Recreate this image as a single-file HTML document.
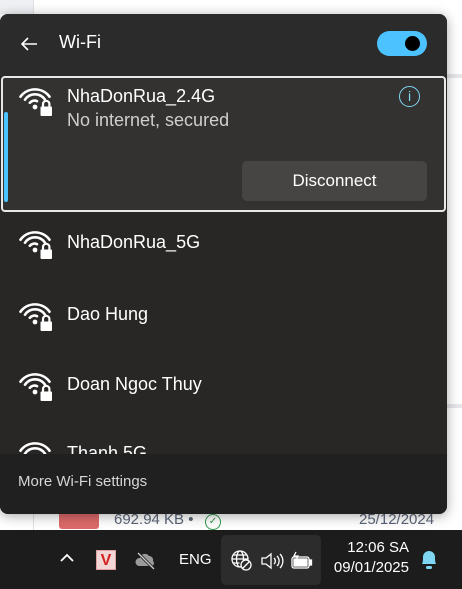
<!DOCTYPE html>
<html><head><meta charset="utf-8"><style>
*{margin:0;padding:0;box-sizing:border-box}
body{width:462px;height:589px;overflow:hidden;background:#fff;font-family:"Segoe UI","Liberation Sans",sans-serif;position:relative}
.abs{position:absolute}
.panel{left:0;top:14px;width:447px;height:500px;border-radius:8px;background:#282726;overflow:hidden;box-shadow:0 2px 12px rgba(0,0,0,.35)}
.t{color:#fff;font-size:18px;white-space:nowrap}
</style></head><body>
<div class="abs" style="left:0;top:0;width:33px;height:14px;background:#eef0f3"></div>
<div class="abs" style="left:33px;top:0;width:1px;height:14px;background:#dfe1e5"></div>
<div class="abs" style="left:447px;top:74px;width:15px;height:4px;background:#e6e7ea"></div>
<div class="abs" style="left:447px;top:404px;width:15px;height:4px;background:#e6e7ea"></div>
<div class="abs" style="left:33px;top:514px;width:1px;height:16px;background:#dfe1e5"></div>
<div class="abs" style="left:59px;top:511px;width:40px;height:18px;border-radius:3px;background:#dd6a6a"></div>
<div class="abs" style="left:114px;top:511px;font-size:15px;color:#5a6478">692.94 KB •</div>
<div class="abs" style="left:205px;top:514px;width:16px;height:16px;border:1.5px solid #2a9a4a;border-radius:50%;color:#2a9a4a;font-size:10px;text-align:center;line-height:13px">✓</div>
<div class="abs" style="left:359px;top:511px;font-size:15px;color:#5a6478">25/12/2024</div>

<div class="abs panel">
  <div class="abs" style="left:0;top:0;width:447px;height:62px;background:#2b2b2b"></div>
  <svg class="abs" style="left:20px;top:22px" width="18" height="16"><path d="M17 8H2M8 2L2 8l6 6" stroke="#fff" stroke-width="1.6" fill="none"/></svg>
  <div class="abs t" style="left:59px;top:18px">Wi-Fi</div>
  <div class="abs" style="left:377px;top:17px;width:50px;height:25px;border-radius:13px;background:#4cc2ff"></div>
  <div class="abs" style="left:405px;top:22px;width:15px;height:15px;border-radius:50%;background:#000"></div>

  <div class="abs" style="left:1px;top:62px;width:445px;height:136px;border:2px solid #e8e8e8;border-radius:4px;background:#333231"></div>
  <div class="abs" style="left:4px;top:98px;width:4px;height:90px;border-radius:2px;background:#4cc2ff"></div>
  <svg class="abs" style="left:18px;top:72px" width="36" height="32"><g stroke="#fff" stroke-width="2.6" fill="none" stroke-linecap="round"><path d="M2.5 10.7A18 18 0 0 1 31.5 10.7"/><path d="M7 13.7A12 12 0 0 1 27 13.7"/><path d="M11.8 16.8A6 6 0 0 1 19 15.2"/></g><circle cx="17" cy="21" r="2.4" fill="#fff"/><path d="M25 21v-3a3.2 3.2 0 0 1 6.4 0v3" stroke="#fff" stroke-width="2.2" fill="none"/><rect x="22.5" y="20.5" width="11.5" height="9.5" rx="1" fill="#fff"/></svg>
  <div class="abs t" style="left:67px;top:72px">NhaDonRua_2.4G</div>
  <div class="abs t" style="left:67px;top:96px;color:#cfcfcf">No internet, secured</div>
  <div class="abs" style="left:399px;top:72px;width:21px;height:21px;border:1.6px solid #7fd6f3;border-radius:50%;color:#7fd6f3;font-size:14px;text-align:center;line-height:18px">i</div>
  <div class="abs" style="left:242px;top:147px;width:185px;height:40px;border-radius:5px;background:#464543;color:#fff;font-size:17px;text-align:center;line-height:40px">Disconnect</div>

  <svg class="abs" style="left:18px;top:215px" width="36" height="32"><g stroke="#fff" stroke-width="2.6" fill="none" stroke-linecap="round"><path d="M2.5 10.7A18 18 0 0 1 31.5 10.7"/><path d="M7 13.7A12 12 0 0 1 27 13.7"/><path d="M11.8 16.8A6 6 0 0 1 19 15.2"/></g><circle cx="17" cy="21" r="2.4" fill="#fff"/><path d="M25 21v-3a3.2 3.2 0 0 1 6.4 0v3" stroke="#fff" stroke-width="2.2" fill="none"/><rect x="22.5" y="20.5" width="11.5" height="9.5" rx="1" fill="#fff"/></svg>
  <div class="abs t" style="left:67px;top:218px">NhaDonRua_5G</div>
  <svg class="abs" style="left:18px;top:287px" width="36" height="32"><g stroke="#fff" stroke-width="2.6" fill="none" stroke-linecap="round"><path d="M2.5 10.7A18 18 0 0 1 31.5 10.7"/><path d="M7 13.7A12 12 0 0 1 27 13.7"/><path d="M11.8 16.8A6 6 0 0 1 19 15.2"/></g><circle cx="17" cy="21" r="2.4" fill="#fff"/><path d="M25 21v-3a3.2 3.2 0 0 1 6.4 0v3" stroke="#fff" stroke-width="2.2" fill="none"/><rect x="22.5" y="20.5" width="11.5" height="9.5" rx="1" fill="#fff"/></svg>
  <div class="abs t" style="left:67px;top:290px">Dao Hung</div>
  <svg class="abs" style="left:18px;top:357px" width="36" height="32"><g stroke="#fff" stroke-width="2.6" fill="none" stroke-linecap="round"><path d="M2.5 10.7A18 18 0 0 1 31.5 10.7"/><path d="M7 13.7A12 12 0 0 1 27 13.7"/><path d="M11.8 16.8A6 6 0 0 1 19 15.2"/></g><circle cx="17" cy="21" r="2.4" fill="#fff"/><path d="M25 21v-3a3.2 3.2 0 0 1 6.4 0v3" stroke="#fff" stroke-width="2.2" fill="none"/><rect x="22.5" y="20.5" width="11.5" height="9.5" rx="1" fill="#fff"/></svg>
  <div class="abs t" style="left:67px;top:360px">Doan Ngoc Thuy</div>
  <svg class="abs" style="left:18px;top:426px" width="36" height="32"><g stroke="#fff" stroke-width="2.6" fill="none" stroke-linecap="round"><path d="M2.5 10.7A18 18 0 0 1 31.5 10.7"/><path d="M7 13.7A12 12 0 0 1 27 13.7"/></g></svg>
  <div class="abs t" style="left:67px;top:429px">Thanh 5G</div>

  <div class="abs" style="left:0;top:440px;width:447px;height:60px;background:#202020"></div>
  <div class="abs" style="left:18px;top:459px;color:#d6d6d6;font-size:15px">More Wi-Fi settings</div>
</div>

<div class="abs" style="left:0;top:530px;width:462px;height:59px;background:#1c1c1c"></div>
<svg class="abs" style="left:59px;top:553px" width="16" height="10"><path d="M2 8l6-6 6 6" stroke="#fff" stroke-width="1.8" fill="none"/></svg>
<div class="abs" style="left:96px;top:550px;width:20px;height:20px;background:#f3d6d6;border:1px solid #e0a0a0;color:#d42020;font-weight:bold;font-size:16px;text-align:center;line-height:19px">V</div>
<svg class="abs" style="left:135px;top:550px" width="22" height="20"><path d="M4 16a4 4 0 0 1 1-8 5 5 0 0 1 9-2 4 4 0 0 1 4 5 3 3 0 0 1-1 5z" fill="#9a9a9a"/><path d="M3 3l16 16" stroke="#1c1c1c" stroke-width="3"/><path d="M3 3l16 16" stroke="#ccc" stroke-width="1.3"/></svg>
<div class="abs" style="left:179px;top:551px;color:#fff;font-size:15px">ENG</div>
<div class="abs" style="left:221px;top:535px;width:100px;height:50px;border-radius:5px;background:#2c2c2c"></div>
<svg class="abs" style="left:230px;top:549px" width="24" height="24" fill="none" stroke="#fff" stroke-width="1.3"><circle cx="10" cy="10" r="8"/><ellipse cx="10" cy="10" rx="3.5" ry="8"/><path d="M2 10h16M3.5 6h13M3.5 14h6"/><circle cx="16" cy="16" r="5" fill="#2c2c2c"/><path d="M12.5 19.5l7-7"/></svg>
<svg class="abs" style="left:260px;top:551px" width="24" height="20" fill="none" stroke="#fff" stroke-width="1.3"><path d="M2 7h4l5-4v14l-5-4H2z"/><path d="M14 7a4 4 0 0 1 0 6M17 5a7 7 0 0 1 0 10M20 3a10 10 0 0 1 0 14"/></svg>
<svg class="abs" style="left:290px;top:550px" width="24" height="22" fill="none" stroke="#fff" stroke-width="1.3"><rect x="2" y="7" width="17" height="11" rx="2"/><rect x="19.5" y="10" width="2" height="5" fill="#fff"/><rect x="4" y="9" width="13" height="7" fill="#fff"/><path d="M6 2l-2 4h4l-2 4" stroke="#fff"/></svg>
<div class="abs" style="left:340px;top:539px;color:#fff;font-size:15px;text-align:right;width:69px">12:06 SA</div>
<div class="abs" style="left:320px;top:559px;color:#fff;font-size:15px;text-align:right;width:89px">09/01/2025</div>
<svg class="abs" style="left:419px;top:548px" width="20" height="24"><path d="M3 16c1-2 1-4 1-7a6 6 0 0 1 12 0c0 3 0 5 1 7z" fill="#7fd6f3"/><rect x="7" y="18" width="6" height="3" rx="1.5" fill="#7fd6f3"/></svg>
</body></html>
